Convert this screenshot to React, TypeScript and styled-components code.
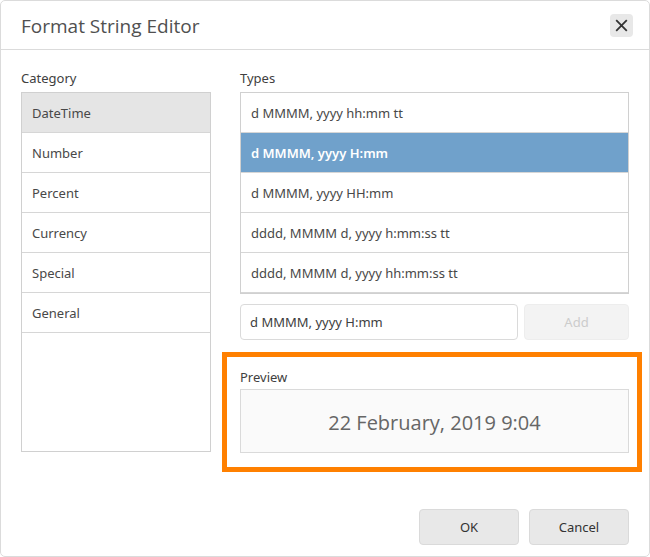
import React, { useState } from 'react';
import styled, { createGlobalStyle } from 'styled-components';

const GlobalStyle = createGlobalStyle`
  *, *::before, *::after { box-sizing: border-box; }
  body {
    margin: 0;
    background: #fff;
    color: #404040;
    font-family: "Noto Sans", "Open Sans", sans-serif;
    font-size: 13px;
    line-height: 20px;
  }
  button, input { font: inherit; color: inherit; }
`;

const Dialog = styled.section`
  display: flex;
  flex-direction: column;
  min-height: 100vh;
  background: #fff;
  border: 1px solid #dbdbdb;
  border-radius: 5px;
`;

const Header = styled.header`
  display: flex;
  align-items: center;
  justify-content: space-between;
  height: 49px;
  padding: 0 16px 0 20px;
  border-bottom: 1px solid #dbdbdb;
`;

const Title = styled.h1`
  margin: 0;
  padding-top: 2px;
  font-family: "Open Sans", "Noto Sans", sans-serif;
  font-size: 19px;
  line-height: 28px;
  font-weight: 400;
  color: #505050;
`;

const CloseButton = styled.button`
  display: flex;
  align-items: center;
  justify-content: center;
  width: 23px;
  height: 23px;
  padding: 0;
  border: 0;
  border-radius: 4px;
  background: #e8e8e8;
  color: #333;
`;

const Body = styled.div`
  display: grid;
  grid-template-columns: 190px minmax(0, 1fr);
  column-gap: 29px;
  padding: 18px 20px 0;
`;

const Column = styled.div`
  display: flex;
  flex-direction: column;
`;

const Label = styled.div`
  color: #404040;
`;

const List = styled.div<{ $minHeight?: number }>`
  margin-top: 4px;
  min-height: ${(p) => p.$minHeight ?? 0}px;
  border: 1px solid #d0d0d0;
`;

const Option = styled.button<{ $tone?: 'muted' | 'accent' }>`
  display: block;
  width: 100%;
  height: 40px;
  padding: 0 10px;
  border: 0;
  border-bottom: 1px solid #d6d6d6;
  text-align: left;
  background: ${(p) =>
    p.$tone === 'accent' ? '#70a1cb' : p.$tone === 'muted' ? '#e5e5e5' : '#fff'};
  color: ${(p) => (p.$tone === 'accent' ? '#fff' : '#484848')};
  font-weight: ${(p) => (p.$tone === 'accent' ? 600 : 400)};
`;

const FormatRow = styled.form`
  display: flex;
  gap: 6px;
  margin-top: 10px;
`;

const FormatInput = styled.input`
  flex: 1;
  min-width: 0;
  height: 36px;
  padding: 0 9px;
  border: 1px solid #dadada;
  border-radius: 4px;
  background: #fff;
`;

const AddButton = styled.button`
  width: 105px;
  height: 36px;
  border: 1px solid #ededed;
  border-radius: 4px;
  background: #f3f3f3;
  color: #cccccc;
`;

const PreviewFrame = styled.div`
  margin: 12px -13px 0 -18px;
  padding: 10px 8px 14px 13px;
  border: 5px solid #ff8000;
`;

const PreviewValue = styled.output`
  display: flex;
  align-items: center;
  justify-content: center;
  height: 64px;
  margin-top: 2px;
  padding-top: 4px;
  border: 1px solid #dadada;
  background: #fafafa;
  color: #666;
  font-family: "Open Sans", "Noto Sans", sans-serif;
  font-size: 20px;
  line-height: 28px;
`;

const Footer = styled.footer`
  display: flex;
  justify-content: flex-end;
  gap: 10px;
  margin-top: auto;
  padding: 20px 20px 11px;
`;

const FooterButton = styled.button`
  width: 100px;
  height: 36px;
  border: 1px solid #dadada;
  border-radius: 4px;
  background: #e8e8e8;
  color: #333;
`;

const categories = ['DateTime', 'Number', 'Percent', 'Currency', 'Special', 'General'];
const types = [
  'd MMMM, yyyy hh:mm tt',
  'd MMMM, yyyy H:mm',
  'd MMMM, yyyy HH:mm',
  'dddd, MMMM d, yyyy h:mm:ss tt',
  'dddd, MMMM d, yyyy hh:mm:ss tt',
];

export default function App() {
  const [category, setCategory] = useState('DateTime');
  const [format, setFormat] = useState(types[1]);

  return (
    <>
      <GlobalStyle />
      <Dialog role="dialog" aria-labelledby="dialog-title">
        <Header>
          <Title id="dialog-title">Format String Editor</Title>
          <CloseButton type="button" aria-label="Close">
            <svg width="13" height="13" viewBox="0 0 13 13" fill="none" stroke="currentColor" strokeWidth="1.8">
              <path d="M1.2 1.2 11.8 11.8M11.8 1.2 1.2 11.8" />
            </svg>
          </CloseButton>
        </Header>
        <Body>
          <Column>
            <Label id="category-label">Category</Label>
            <List role="listbox" aria-labelledby="category-label" $minHeight={360}>
              {categories.map((name) => (
                <Option
                  key={name}
                  type="button"
                  role="option"
                  aria-selected={name === category}
                  $tone={name === category ? 'muted' : undefined}
                  onClick={() => setCategory(name)}
                >
                  {name}
                </Option>
              ))}
            </List>
          </Column>
          <Column>
            <Label id="types-label">Types</Label>
            <List role="listbox" aria-labelledby="types-label">
              {types.map((type) => (
                <Option
                  key={type}
                  type="button"
                  role="option"
                  aria-selected={type === format}
                  $tone={type === format ? 'accent' : undefined}
                  onClick={() => setFormat(type)}
                >
                  {type}
                </Option>
              ))}
            </List>
            <FormatRow onSubmit={(e) => e.preventDefault()}>
              <FormatInput
                type="text"
                aria-label="Format string"
                value={format}
                onChange={(e) => setFormat(e.target.value)}
              />
              <AddButton type="submit" disabled>
                Add
              </AddButton>
            </FormatRow>
            <PreviewFrame>
              <Label id="preview-label">Preview</Label>
              <PreviewValue aria-labelledby="preview-label">22 February, 2019 9:04</PreviewValue>
            </PreviewFrame>
          </Column>
        </Body>
        <Footer>
          <FooterButton type="button">OK</FooterButton>
          <FooterButton type="button">Cancel</FooterButton>
        </Footer>
      </Dialog>
    </>
  );
}
